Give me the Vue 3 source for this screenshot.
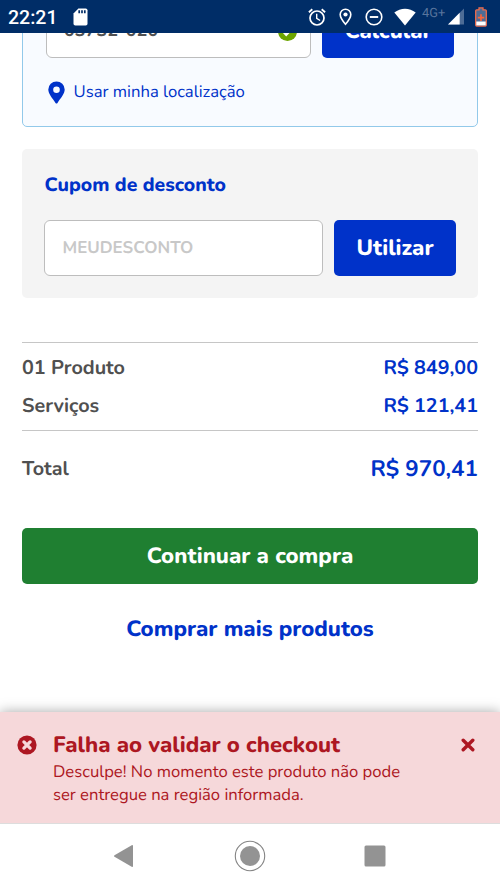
<script setup>
const items = [
  { label: '01 Produto', value: 'R$ 849,00', name: 'produto' },
  { label: 'Serviços', value: 'R$ 121,41', name: 'servicos' },
]
</script>

<template>
  <div class="screen">
    <header class="status">
      <span class="clock">22:21</span>
      <svg class="sd" width="15" height="18" viewBox="0 0 15 18">
        <path d="M5.4.5h7.3a1.8 1.8 0 0 1 1.8 1.8v13.4a1.8 1.8 0 0 1-1.8 1.8H2.3a1.8 1.8 0 0 1-1.8-1.8V5.5z" fill="#fff" />
        <path d="M6.2 2.2v3M9 2.2v3M11.8 2.2v3" stroke="#002d67" stroke-width="1.7" />
      </svg>
      <div class="indicators">
        <svg class="alarm" width="18" height="18" viewBox="0 0 18 18" fill="none" stroke="#fff" stroke-width="1.7">
          <circle cx="9" cy="10" r="7" />
          <path d="M.9 4.2 4.3 1.3M17.1 4.2l-3.4-2.9" stroke-width="1.8" />
          <path d="M8.7 5.8v4.6l3.4 2.1" stroke-width="1.4" />
        </svg>
        <svg class="place" width="13" height="18" viewBox="0 0 13 18">
          <path d="M6.5 1.2A5.3 5.3 0 0 0 1.2 6.5c0 3.7 5.3 9.7 5.3 9.7s5.3-6 5.3-9.7A5.3 5.3 0 0 0 6.5 1.2z" fill="none" stroke="#fff" stroke-width="1.6" />
          <circle cx="6.5" cy="6.5" r="2.1" fill="#fff" />
        </svg>
        <svg class="dnd" width="18" height="18" viewBox="0 0 18 18" fill="none" stroke="#fff" stroke-width="1.6">
          <circle cx="9" cy="9" r="7.8" />
          <path d="M4.8 9h8.4" stroke-width="1.9" />
        </svg>
        <svg class="wifi" width="22" height="18" viewBox="0 0 22 18">
          <path d="M.3 4.6C6.5-.7 15.5-.7 21.7 4.6L11 17.4z" fill="#fff" />
        </svg>
        <span class="network">4G+</span>
        <svg class="signal" width="16" height="17" viewBox="0 0 16 17">
          <path d="M16 .4v16.2H0z" fill="#4d6c96" />
          <path d="M11.7 4.8v11.8H0z" fill="#fff" />
        </svg>
        <svg class="battery" width="12" height="20" viewBox="0 0 12 20">
          <path d="M4 .8h4v2h2.3q1 0 1 1v14.3q0 1-1 1H1.7q-1 0-1-1V3.8q0-1 1-1H4z" fill="#4d6c96" stroke="#f06a4a" stroke-width="1.3" />
          <path d="M1.3 14.5h9.4v3.9H1.3z" fill="#fff" />
          <path d="M6 7.3v6.6M2.8 10.6h6.4" stroke="#ff6438" stroke-width="1.6" />
        </svg>
      </div>
    </header>

    <div class="viewport">
      <section class="shipping">
        <div class="form-row">
          <div class="field zip">
            <span class="zip-text">03732-020</span>
            <svg width="19" height="19" viewBox="0 0 19 19">
              <circle cx="9.5" cy="9.5" r="9.5" fill="#6ca400" />
              <path d="m5 9.3 3.2 3.4 6-6.2" fill="none" stroke="#fff" stroke-width="2.4" />
            </svg>
          </div>
          <button class="action calc"><span>Calcular</span></button>
        </div>
        <a class="locate">
          <svg width="17" height="23" viewBox="0 0 17 23">
            <path fill-rule="evenodd" d="M8.5.4A8.2 8.2 0 0 0 .3 8.6c0 4.2 4 8.6 7.2 13.3q1 1.3 2 0c3.2-4.7 7.2-9.1 7.2-13.3A8.2 8.2 0 0 0 8.5.4zm0 5a3.3 3.3 0 1 1 0 6.6 3.3 3.3 0 0 1 0-6.6z" fill="#0032c9" />
          </svg>
          <span>Usar minha localização</span>
        </a>
      </section>
    </div>

    <main>
      <section class="coupon">
        <h2><span>Cupom de desconto</span></h2>
        <div class="form-row">
          <div class="field code"><span>MEUDESCONTO</span></div>
          <button class="action use"><span>Utilizar</span></button>
        </div>
      </section>

      <section class="summary">
        <div class="items">
          <div v-for="item in items" :key="item.name" class="line">
            <span class="label">{{ item.label }}</span>
            <span class="price">{{ item.value }}</span>
          </div>
        </div>
        <div class="line total">
          <span class="label">Total</span>
          <span class="total-price">R$ 970,41</span>
        </div>
      </section>

      <button class="continue"><span>Continuar a compra</span></button>
      <a class="more"><span>Comprar mais produtos</span></a>
    </main>

    <aside class="toast">
      <svg class="error" width="20" height="20" viewBox="0 0 20 20">
        <circle cx="10" cy="10" r="9.6" fill="#ad1722" />
        <path d="m6.9 6.9 6.2 6.2M13.1 6.9l-6.2 6.2" stroke="#f6d8da" stroke-width="3.3" stroke-linecap="round" />
      </svg>
      <div class="message">
        <h3><span>Falha ao validar o checkout</span></h3>
        <p>Desculpe! No momento este produto não pode<br>ser entregue na região informada.</p>
      </div>
      <svg class="close" width="14" height="14" viewBox="0 0 14 14">
        <path d="m2.2 2.2 9.6 9.6M11.8 2.2l-9.6 9.6" stroke="#ad1722" stroke-width="3.4" stroke-linecap="round" />
      </svg>
    </aside>

    <nav class="system">
      <svg width="22" height="24" viewBox="0 0 22 24"><path d="M.5 11.2 17.7 1.2q1.3-.6 1.3.8v20q0 1.4-1.3.8L.5 12.8q-1-.8 0-1.6z" fill="#939393" /></svg>
      <svg width="32" height="32" viewBox="0 0 32 32"><circle cx="16" cy="16" r="14.7" fill="none" stroke="#858585" stroke-width="1.1" /><circle cx="16" cy="16" r="10" fill="#939393" /></svg>
      <svg width="22" height="22" viewBox="0 0 22 22"><rect x=".5" y=".5" width="21" height="21" rx="1.5" fill="#939393" /></svg>
    </nav>
  </div>
</template>

<style>
body { background: #fff; }
</style>

<style scoped>
* { box-sizing: border-box; }
.screen { width: 500px; height: 889px; overflow: hidden; display: flex; flex-direction: column; font-family: Nunito, Lato, "Open Sans", sans-serif; text-rendering: geometricPrecision; color: #505050; background: #fff; white-space: nowrap; }
svg { display: block; flex: none; }
h2, h3, p { margin: 0; }
button { border: 0; padding: 0; font-family: inherit; color: #fff; text-rendering: inherit; }
.status { height: 33px; flex: none; display: flex; align-items: center; padding: 0 13px 0 8px; background: #002d67; color: #fff; font-family: Roboto, sans-serif; }
.clock { font-size: 19.5px; font-weight: 500; line-height: 33px; width: 65px; padding-top: 1px; }
.indicators { margin-left: auto; display: flex; align-items: center; }
.place { margin-left: 13px; }
.dnd { margin-left: 13px; }
.wifi { margin-left: 11px; }
.network { width: 32px; padding: 0 0 6px 6px; font-size: 12.8px; line-height: 14px; color: #58749c; }
.battery { margin-left: 11px; }
.viewport { height: 94px; flex: none; padding: 0 22px; display: flex; flex-direction: column; justify-content: flex-end; overflow: hidden; }
.shipping { height: 190px; flex: none; display: flex; flex-direction: column; justify-content: flex-end; padding: 0 23px 22px; border: 1.5px solid #92c9ea; border-radius: 5px; background: #f8fbff; }
.form-row { display: flex; gap: 11px; }
.field { height: 56px; display: flex; align-items: center; border: 1px solid #bdbdbd; border-radius: 6px; background: #fff; }
.zip { width: 266px; padding: 2px 13px 0 17px; justify-content: space-between; }
.zip-text { font-size: 18px; font-weight: 700; }
.action { height: 56px; border-radius: 5px; background: #0032c9; font-size: 22.2px; font-weight: 800; }
.calc { width: 132px; padding-top: 2px; }
.locate { height: 24px; margin-top: 22px; display: flex; align-items: center; gap: 8.5px; padding-left: 2px; font-size: 16.7px; font-weight: 400; color: #0032c9; }
.locate span { padding-bottom: 2px; }
.coupon { margin: 22px 22px 0; height: 149px; padding: 22px; border-radius: 5px; background: #f4f4f4; }
.coupon h2 { height: 49px; padding: 1px 0 0 .5px; line-height: 26px; font-size: 19.4px; font-weight: 800; color: #0032c9; }
.code { width: 279px; padding: 0 0 1px 17.5px; font-size: 16.9px; font-weight: 700; color: #c8c8c8; }
.use { width: 122px; }
.summary { margin: 44px 22px 0; font-weight: 700; }
.items { height: 89px; padding-top: 6px; border-top: 1px solid #c6c6c6; border-bottom: 1px solid #c6c6c6; }
.line { height: 37.5px; display: flex; align-items: center; justify-content: space-between; font-size: 19.7px; }
.label { font-size: 19.8px; }
.price, .total-price { color: #0032c9; }
.total { height: 75px; }
.total-price { font-size: 22.4px; }
.continue { display: block; width: 456px; height: 56px; margin: 22px 22px 0; border-radius: 5px; background: #1f7f31; font-size: 22.2px; font-weight: 800; }
.more { display: flex; justify-content: center; margin-top: 29px; line-height: 32px; font-size: 22.2px; font-weight: 800; color: #0032c9; }
.toast { height: 111px; margin-top: auto; flex: none; display: flex; padding: 17px 25px 0 17px; background: #f6d8da; color: #ad1722; box-shadow: 0 0 12px rgba(0, 0, 0, .35); }
.error { margin-top: 6px; }
.message { margin-left: 16px; }
.message h3 { font-size: 22.2px; line-height: 32px; font-weight: 800; margin-bottom: -1px; }
.message p { font-size: 16.65px; line-height: 23px; font-weight: 400; }
.close { margin: 9px 0 0 auto; }
.system { position: relative; height: 66px; flex: none; display: flex; align-items: center; justify-content: space-between; padding: 0 114px 2px; border-top: 1px solid #ddd; background: #fff; }
</style>
